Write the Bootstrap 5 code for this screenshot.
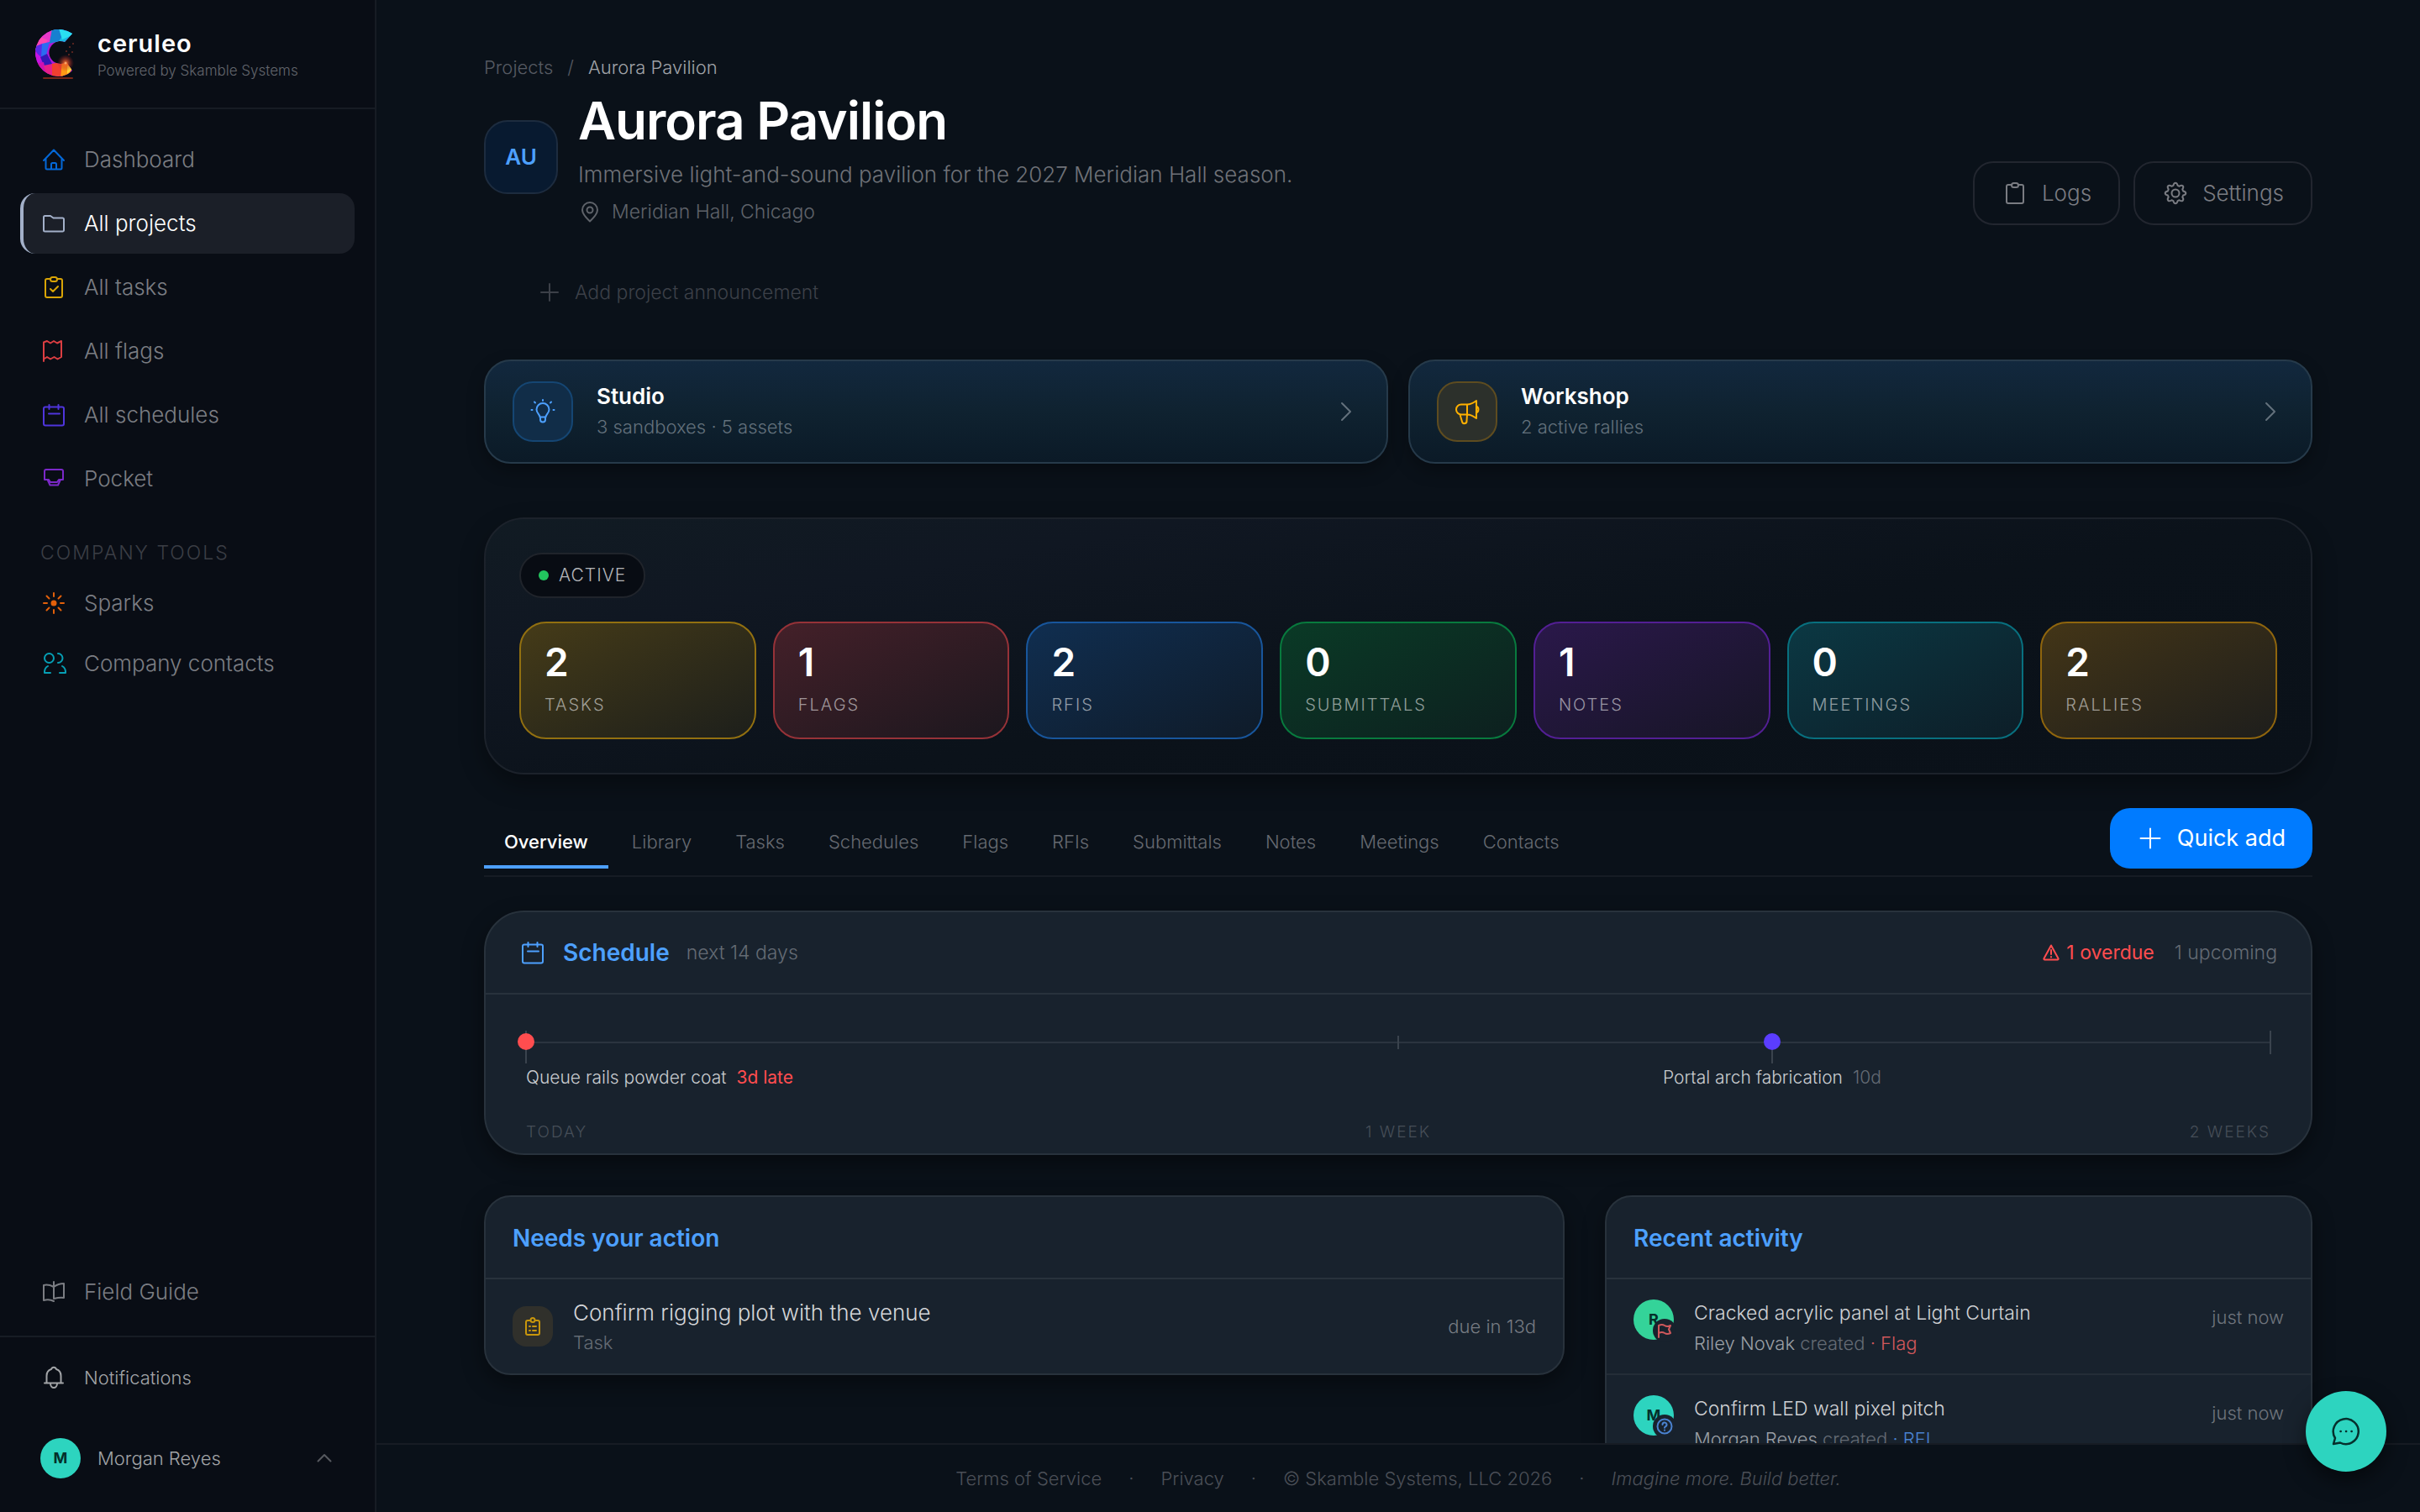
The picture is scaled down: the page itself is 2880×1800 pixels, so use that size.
<!DOCTYPE html>
<html lang="en" data-bs-theme="dark">
<head>
<meta charset="utf-8">
<meta name="viewport" content="width=device-width, initial-scale=1">
<title>Aurora Pavilion – ceruleo</title>
<link href="https://cdn.jsdelivr.net/npm/bootstrap@5.3.0/dist/css/bootstrap.min.css" rel="stylesheet">
<style>
  :root { --line: #171c24; --cardline: #28323c; --cardbg: #18222d; --sky: #4da0ff; --teal: #2dd4bf; }
  body { font-family: Inter, "Noto Sans", sans-serif; font-weight: 300; font-size: 22px; line-height: 32px; background: #0a1119; color: #c9ccd0; }
  a { color: inherit; text-decoration: none; }
  button { font-weight: 300; }
  svg { display: block; flex: none; fill: none; stroke: currentColor; stroke-width: 2; stroke-linecap: round; stroke-linejoin: round; }

  /* sidebar */
  .side { width: 448px; background: #090d15; border-right: 2px solid var(--line); }
  .brand { height: 130px; padding: 34px 40px 0; gap: 26px; border-bottom: 2px solid var(--line); }
  .brand-name { font-size: 29px; font-weight: 600; color: #fff; line-height: 36px; letter-spacing: 1px; }
  .brand-sub { font-size: 17px; line-height: 28px; color: #62656c; }
  .side-nav { padding: 24px 24px 0; gap: 4px; }
  .side-link { height: 72px; gap: 20px; padding: 0 20px; border-left: 4px solid transparent; border-radius: 18px; font-size: 26px; color: #7b7d83; }
  .side-link.active { background: #1b1f28; border-left-color: #a3b0c9; color: #fff; }
  .side-head { margin: 36px 24px 8px 48px; font-size: 23px; letter-spacing: 2px; color: #3b3e45; font-weight: 300; line-height: 32px; }
  .side-foot { border-top: 2px solid var(--line); padding: 12px 24px 28px; }
  .side-foot .side-link { font-size: 22px; color: #a2a4a7; }
  .face { width: 48px; height: 48px; border-radius: 50%; background: var(--teal); color: #04302b; font-weight: 700; font-size: 18px; flex: none; }

  /* page column */
  .scroller { padding: 64px 128px 0; }
  .crumbs { font-size: 22px; gap: 17px; color: #565a62; margin-bottom: 10px; }
  .monogram { width: 88px; height: 88px; border: 2px solid #1d2c3f; border-radius: 28px; background: #081a30; color: var(--sky); font-weight: 600; font-size: 26px; flex: none; }
  .headline { font-size: 62px; line-height: 76px; font-weight: 600; color: #fff; letter-spacing: -1px; }
  .tagline { font-size: 26px; line-height: 32px; margin: 10px 0 12px; color: #6f7278; }
  .place { font-size: 23px; gap: 12px; color: #5f636a; }
  .btn-ghost { height: 76px; padding: 0 32px; gap: 16px; border: 2px solid #22262f; border-radius: 24px; font-size: 26px; color: #7a7c82; background: transparent; }
  .announce { margin: 64px 0 64px 60px; gap: 12px; color: #3c4048; font-size: 23px; line-height: 32px; padding: 0; background: none; border: 0; }

  .portal { border: 2px solid #263a4a; border-radius: 32px; padding: 24px 32px; gap: 28px; background: linear-gradient(180deg, #12283e 0%, #0f2230 50%, #0b1a27 100%); box-shadow: 0 8px 20px rgba(0,0,0,.3); color: #63717c; }
  .portal-icon { width: 72px; height: 72px; border-radius: 24px; border: 2px solid #154673; background: #112d48; color: var(--sky); flex: none; }
  .portal-icon.gold { border-color: #5e4c20; background: #2c302b; color: #ffb000; }
  .portal-name { font-size: 26px; line-height: 36px; font-weight: 600; color: #fff; }
  .portal-sub { font-size: 22px; line-height: 36px; }

  .pulse { margin-top: 64px; border: 2px solid #1c222b; border-radius: 48px; padding: 40px; background: linear-gradient(170deg, #111b23 0%, #101722 22%, #0b121a 55%, #0a1119 100%); box-shadow: 0 12px 28px rgba(0,0,0,.35); }
  .state { height: 54px; padding: 0 21px; gap: 12px; border: 2px solid #20242b; border-radius: 27px; background: #080c13; font-size: 21px; letter-spacing: 1px; color: #b4b6b9; margin-bottom: 28px; }
  .state i { width: 12px; height: 12px; border-radius: 50%; background: #22c55e; }
  .tiles { gap: 20px; }
  .tile { height: 140px; padding: 26px 28px 0; border: 2px solid var(--edge); border-radius: 32px; background: linear-gradient(155deg, var(--from), var(--to)); }
  .tile b { display: block; font-size: 46px; line-height: 40px; font-weight: 600; color: #fff; }
  .tile span { display: block; font-size: 20px; line-height: 28px; margin-top: 17px; letter-spacing: 2px; color: rgba(255,255,255,.55); }

  .tabs { margin-top: 40px; padding-bottom: 8px; border-bottom: 2px solid #161c24; }
  .tabs a { padding: 0 24px 12px; border-bottom: 4px solid transparent; color: #666a71; font-size: 22px; }
  .tabs a.active { color: #fff; border-bottom-color: var(--sky); font-weight: 500; }
  .btn-quick { height: 72px; padding: 0 32px; gap: 16px; border: 0; border-radius: 24px; background: #007bff; color: #fff; font-size: 27px; font-weight: 400; }

  .panel { border: 2px solid var(--cardline); border-radius: 32px; background: var(--cardbg); box-shadow: 0 10px 26px rgba(0,0,0,.4); }
  .panel-big { border-radius: 48px; margin-top: 40px; }
  .panel-head { height: 98px; padding: 2px 32px 0; border-bottom: 2px solid var(--cardline); }
  .panel-big .panel-head { padding: 0 40px; }
  .panel-title { font-size: 28px; line-height: 32px; font-weight: 600; color: var(--sky); margin: 0; }
  .faint { color: #646b74; }
  .note { font-size: 23px; }
  .late { color: #ff4d4f; font-weight: 400; }
  .rail-wrap { padding: 40px 48px 13px; }
  .rail { position: relative; height: 72px; }
  .rail::before { content: ""; position: absolute; left: 0; right: 0; top: 16px; height: 2px; background: #2b343f; }
  .tick { position: absolute; width: 2px; height: 28px; top: 3px; margin-left: -1px; background: #3a434d; }
  .tick.half { height: 16px; top: 9px; }
  .pin { position: absolute; top: 6px; width: 20px; height: 20px; margin-left: -10px; border-radius: 50%; }
  .pin::after { content: ""; position: absolute; left: 9px; top: 20px; width: 2px; height: 16px; background: #3a434d; }
  .pin-text { position: absolute; top: 43px; font-size: 21px; line-height: 32px; white-space: nowrap; color: #c9ccd0; }
  .pin-text.mid { transform: translateX(-50%); }
  .axis { margin-top: 40px; font-size: 19px; line-height: 24px; letter-spacing: 2px; color: #464e58; }

  .duo { display: grid; grid-template-columns: 84fr 55fr; gap: 48px; margin-top: 48px; align-items: start; }
  .todo { height: 112px; padding: 0 32px; gap: 24px; }
  .todo-name { font-size: 26px; line-height: 38px; color: #d4d6d9; }
  .chip { width: 48px; height: 48px; border-radius: 16px; background: #30302b; color: #c8960c; flex: none; }
  .entry { height: 114px; padding: 24px 32px 0; gap: 24px; border-bottom: 2px solid #242d37; }
  .entry .face { position: relative; }
  .entry-name { font-size: 23px; color: #cfd1d4; }
  .entry-by { margin-top: 4px; color: #9a9fa5; }
  .kind { position: absolute; right: -3px; bottom: -3px; width: 28px; height: 28px; border-radius: 50%; background: var(--cardbg); }
  .when { line-height: 42px; color: #6f757d; }
  .red { color: #d0585c; }
  .blue { color: #4a82d0; }
  .foot { height: 82px; border-top: 2px solid var(--line); gap: 32px; color: #4b4f57; background: #0a1119; }
  .chat { position: absolute; right: 40px; bottom: 48px; width: 96px; height: 96px; border: 0; border-radius: 50%; background: var(--teal); color: #06302d; box-shadow: 0 10px 24px rgba(0,0,0,.5); }
</style>
<script src="https://cdn.jsdelivr.net/npm/bootstrap@5.3.0/dist/js/bootstrap.bundle.min.js"></script>
</head>
<body>
<div class="d-flex vh-100 overflow-hidden position-relative">

  <aside class="side d-flex flex-column flex-shrink-0">
    <div class="brand d-flex">
      <svg width="50" height="62" viewBox="0 0 50 62" aria-label="ceruleo logo">
        <defs>
          <clipPath id="cee"><path d="M46 6A28 28 0 1 0 29 57C36 57 42 54 46 50L39 40A13.500 13.500 0 1 1 37 16z"/></clipPath>
          <radialGradient id="ember"><stop offset="0" stop-color="#ffd090"/><stop offset=".2" stop-color="#f0602a" stop-opacity=".8"/><stop offset="1" stop-color="#a01828" stop-opacity="0"/></radialGradient>
        </defs>
        <g clip-path="url(#cee)" stroke="none">
          <rect width="50" height="60" fill="#b018d8"/>
          <path d="M20 0h30v9L36 17 22 16z" fill="#18b8e0"/><path d="M22 0l-4 18 12-3L40 0z" fill="#1680d0"/><path d="M30 0l20 6-16 7z" fill="#2ae0f0"/>
          <path d="M22 0L4 10l4 10 11-4z" fill="#e838c8"/><path d="M4 8L0 26l9-2 8-10z" fill="#ff48b0"/>
          <path d="M0 22l10-4 6 8-8 10z" fill="#5a28e8"/><path d="M10 18l9-2-4 16-6 2z" fill="#2a6cf0"/><path d="M0 26l9 8-3 12z" fill="#c814e0"/>
          <path d="M8 34l8-4 6 12-8 6z" fill="#3418b8"/><path d="M2 42l10-2 4 18z" fill="#d010b0"/><path d="M12 44l10-2 2 16h-8z" fill="#e82088"/>
          <path d="M22 42l12-3 2 20H22z" fill="#f04030"/><path d="M34 38l14 6-8 14-8 1z" fill="#ff9a14"/><path d="M40 44l8 2-8 8z" fill="#ffd83a"/>
        </g>
        <circle cx="38" cy="41" r="10" fill="url(#ember)" stroke="none"/>
        <path d="M12 59h34" stroke="#c0381c" opacity=".6"/>
        <g fill="#b8402c" stroke="none"><circle cx="43" cy="22" r=".8"/><circle cx="47" cy="18" r=".8"/><circle cx="39" cy="27" r=".8"/><circle cx="46" cy="28" r=".8"/><circle cx="42" cy="31" r=".8"/></g>
      </svg>
      <div>
        <div class="brand-name">ceruleo</div>
        <div class="brand-sub">Powered by Skamble Systems</div>
      </div>
    </div>
    <nav class="side-nav d-flex flex-column">
      <a href="#" class="side-link d-flex align-items-center"><svg width="32" height="32" style="color:#0468d8"><path d="M4 17 16 4.500 28 17M6.500 14.500V26a1.500 1.500 0 0 0 1.500 1.500h16a1.500 1.500 0 0 0 1.500-1.500V14.500M13 27.500V21.500a1.500 1.500 0 0 1 1.500-1.500h3a1.500 1.500 0 0 1 1.500 1.500v6"/></svg>Dashboard</a>
      <a href="#" class="side-link active d-flex align-items-center"><svg width="32" height="32" style="color:#a3b0c9"><path d="M4 24V8.500A1.500 1.500 0 0 1 5.500 7H12l3.500 2.500h11A1.500 1.500 0 0 1 28 11v13a1.500 1.500 0 0 1-1.500 1.500h-21A1.500 1.500 0 0 1 4 24z"/></svg>All projects</a>
      <a href="#" class="side-link d-flex align-items-center"><svg width="32" height="32" style="color:#d9a406"><path d="M12 6H8a2 2 0 0 0-2 2v18a2 2 0 0 0 2 2h16a2 2 0 0 0 2-2V8a2 2 0 0 0-2-2h-4M12 18l3 3 6-6"/><rect x="12" y="4" width="8" height="5" rx="2.500"/></svg>All tasks</a>
      <a href="#" class="side-link d-flex align-items-center"><svg width="32" height="32" style="color:#dc3e42"><path d="M4 28V5.500l4-1.500 4 2.500L16 4l4 2.500L25 4v19l-4.500 2.500-4-2.500-4.500 2.500L8 23l-4 2.500"/></svg>All flags</a>
      <a href="#" class="side-link d-flex align-items-center"><svg width="32" height="32" style="color:#4f35dc"><rect x="4" y="6.500" width="24" height="22" rx="2"/><path d="M10.500 4v5M21.500 4v5M10 14.500h13"/></svg>All schedules</a>
      <a href="#" class="side-link d-flex align-items-center"><svg width="32" height="32" style="color:#7b28c8"><path d="M5 17V7a2 2 0 0 1 2-2h18a2 2 0 0 1 2 2v10h-5l-2 3h-8l-2-3zM8.500 17l3 6.500h9.500l3-6.500"/></svg>Pocket</a>
    </nav>
    <h2 class="side-head">COMPANY TOOLS</h2>
    <nav class="px-4 d-flex flex-column">
      <a href="#" class="side-link d-flex align-items-center"><svg width="32" height="32" style="color:#e2600a"><circle cx="16" cy="16" r="2.500" fill="currentColor"/><path d="M16 4v4M16 24v4M4 16h4M24 16h4M7.500 7.500l3 3M21.500 21.500l3 3M24.500 7.500l-3 3M10.500 21.500l-3 3"/></svg>Sparks</a>
      <a href="#" class="side-link d-flex align-items-center"><svg width="32" height="32" style="color:#069fb5"><circle cx="10.500" cy="9.500" r="5.500"/><path d="M12 27H5v-1.500a8 8 0 0 1 4-6.500M21 4a5.500 5.500 0 0 1 0 11M23 27h7v-1.500a8 8 0 0 0-4-6.500"/></svg>Company contacts</a>
    </nav>
    <div class="mt-auto px-4 pb-3">
      <a href="#" class="side-link d-flex align-items-center"><svg width="32" height="32"><path d="M16 27c-4-2-8-2-12-1V8c4-1 8 0 12 2 4-3 8-4 12-4v17c-4-1-8 0-12 1M16 4v20"/></svg>Field Guide</a>
    </div>
    <div class="side-foot d-flex flex-column gap-4">
      <a href="#" class="side-link d-flex align-items-center"><svg width="32" height="32"><path d="M5 22.500h22M7.500 22.500V14c0-4 2-7 5.500-8 1-3 5-3 6 0 3.500 1 5.500 4 5.500 8v8.500M12 23a4 5 0 0 0 8 0"/></svg>Notifications</a>
      <button type="button" class="side-link border-0 bg-transparent d-flex align-items-center ps-4"><span class="face d-flex align-items-center justify-content-center">M</span>Morgan Reyes<svg width="32" height="32" class="ms-auto" style="color:#56595f"><path d="m8.500 19.500 7.500-7.500 7.500 7.500"/></svg></button>
    </div>
  </aside>

  <main class="flex-grow-1 d-flex flex-column overflow-hidden">
    <div class="scroller flex-grow-1 overflow-hidden">
      <nav class="crumbs d-flex" aria-label="breadcrumb"><a href="#">Projects</a><span>/</span><span style="color:#a0a3a8">Aurora Pavilion</span></nav>

      <header class="d-flex align-items-end justify-content-between">
        <div class="d-flex align-items-center gap-4">
          <div class="monogram d-flex align-items-center justify-content-center">AU</div>
          <div>
            <h1 class="headline mb-0">Aurora Pavilion</h1>
            <p class="tagline">Immersive light-and-sound pavilion for the 2027 Meridian Hall season.</p>
            <div class="place d-flex align-items-center"><svg width="28" height="28"><path d="M23 12c0 5-9 13.500-9 13.500S5 17 5 12a9 9 0 0 1 18 0z"/><circle cx="14" cy="12" r="3.500"/></svg>Meridian Hall, Chicago</div>
          </div>
        </div>
        <div class="d-flex gap-3">
          <button type="button" class="btn-ghost d-flex align-items-center"><svg width="32" height="32"><path d="M12 6H8a2 2 0 0 0-2 2v18a2 2 0 0 0 2 2h16a2 2 0 0 0 2-2V8a2 2 0 0 0-2-2h-4"/><rect x="12" y="4" width="8" height="5" rx="2.500"/></svg>Logs</button>
          <button type="button" class="btn-ghost d-flex align-items-center"><svg width="32" height="32" viewBox="-16 -16 32 32"><circle r="4.500"/><path d="M9.100-2.600Q12.300-1.900 12.300 0T9.100 2.600L8.270 4.600Q10.100 7.300 8.700 8.700T4.600 8.270L2.600 9.100Q1.900 12.300 0 12.300T-2.600 9.100L-4.600 8.270Q-7.300 10.100-8.700 8.700T-8.270 4.600L-9.100 2.600Q-12.300 1.900-12.300 0T-9.100-2.600L-8.270-4.600Q-10.100-7.300-8.700-8.700T-4.600-8.270L-2.600-9.100Q-1.900-12.300 0-12.300T2.600-9.100L4.600-8.270Q7.300-10.100 8.700-8.700T8.270-4.600z"/></svg>Settings</button>
        </div>
      </header>

      <button type="button" class="announce d-flex align-items-center"><svg width="36" height="32"><path d="M18 6v20M8 16h20"/></svg>Add project announcement</button>

      <div class="d-flex gap-4">
        <a href="#" class="portal d-flex align-items-center flex-fill w-50">
          <span class="portal-icon d-flex align-items-center justify-content-center"><svg width="32" height="32"><path d="M12.500 22.500c0-3-4-4.500-4-9a7.500 7.500 0 0 1 15 0c0 4.500-4 6-4 9zM13 22.500v3a3 3 0 0 0 6 0v-3M16 2v1M2.500 14h1M28.500 14h1M6 4.500l1 1M26 4.500l-1 1"/></svg></span>
          <span class="flex-grow-1"><span class="portal-name d-block">Studio</span><span class="portal-sub d-block">3 sandboxes · 5 assets</span></span>
          <svg width="32" height="32"><path d="m11 6 10 10-10 10"/></svg>
        </a>
        <a href="#" class="portal d-flex align-items-center flex-fill w-50">
          <span class="portal-icon gold d-flex align-items-center justify-content-center"><svg width="32" height="32"><path d="M16 7.500H9a6 6 0 0 0 0 12h7zM16 7.500c4 0 7-1.500 11-4.500v21c-4-3-7-4.500-11-4.500M27 9.500a4.500 4.500 0 0 1 0 8M7.500 19.500l2.500 8.500a2.800 2.800 0 0 0 5.500-1l.500-7.500"/></svg></span>
          <span class="flex-grow-1"><span class="portal-name d-block">Workshop</span><span class="portal-sub d-block">2 active rallies</span></span>
          <svg width="32" height="32"><path d="m11 6 10 10-10 10"/></svg>
        </a>
      </div>

      <section class="pulse">
        <div class="state d-inline-flex align-items-center"><i></i>ACTIVE</div>
        <div class="d-flex tiles">
          <div class="tile flex-fill w-100" style="--edge:#927010;--from:#453b18;--to:#1d1f1b"><b>2</b><span>TASKS</span></div>
          <div class="tile flex-fill w-100" style="--edge:#963238;--from:#442029;--to:#1c171e"><b>1</b><span>FLAGS</span></div>
          <div class="tile flex-fill w-100" style="--edge:#18569c;--from:#102e50;--to:#0f1b29"><b>2</b><span>RFIS</span></div>
          <div class="tile flex-fill w-100" style="--edge:#087a3e;--from:#0a3a26;--to:#0d201f"><b>0</b><span>SUBMITTALS</span></div>
          <div class="tile flex-fill w-100" style="--edge:#531f94;--from:#2a184a;--to:#171526"><b>1</b><span>NOTES</span></div>
          <div class="tile flex-fill w-100" style="--edge:#08707f;--from:#0b3843;--to:#0d1e28"><b>0</b><span>MEETINGS</span></div>
          <div class="tile flex-fill w-100" style="--edge:#8f650d;--from:#433517;--to:#1e1e1c"><b>2</b><span>RALLIES</span></div>
        </div>
      </section>

      <div class="tabs d-flex align-items-end justify-content-between">
        <nav class="d-flex gap-1"><a href="#" class="active">Overview</a><a href="#">Library</a><a href="#">Tasks</a><a href="#">Schedules</a><a href="#">Flags</a><a href="#">RFIs</a><a href="#">Submittals</a><a href="#">Notes</a><a href="#">Meetings</a><a href="#">Contacts</a></nav>
        <button type="button" class="btn-quick d-flex align-items-center"><svg width="32" height="32"><path d="M16 4.500v23M4.500 16h23"/></svg>Quick add</button>
      </div>

      <section class="panel panel-big">
        <div class="panel-head d-flex align-items-center">
          <svg width="32" height="32" style="color:#4da0ff"><rect x="4" y="6.500" width="24" height="22" rx="2"/><path d="M10.500 4v5M21.500 4v5M10 14.500h13"/></svg>
          <h2 class="panel-title ms-3 me-3 ps-1 pe-1">Schedule</h2>
          <span class="note faint flex-grow-1">next 14 days</span>
          <span class="note late d-flex align-items-center gap-2"><svg width="20" height="20"><path d="M10 1.500 18.500 17a1 1 0 0 1-1 1.500h-15a1 1 0 0 1-1-1.500zM10 7v5M10 15v.500"/></svg>1 overdue</span>
          <span class="note faint ms-4">1 upcoming</span>
        </div>
        <div class="rail-wrap">
          <div class="rail">
            <i class="tick" style="left:0"></i><i class="tick half" style="left:50%"></i><i class="tick" style="left:100%"></i>
            <i class="pin" style="left:0;background:#ff4d4f"></i>
            <i class="pin" style="left:71.43%;background:#5b3dff"></i>
            <span class="pin-text" style="left:0">Queue rails powder coat<span class="late ms-2 ps-1">3d late</span></span>
            <span class="pin-text mid" style="left:71.43%">Portal arch fabrication<span class="faint ms-2 ps-1">10d</span></span>
          </div>
          <div class="axis d-flex"><span class="col">TODAY</span><span class="col text-center">1 WEEK</span><span class="col text-end">2 WEEKS</span></div>
        </div>
      </section>

      <div class="duo">
        <section class="panel">
          <div class="panel-head d-flex align-items-center"><h2 class="panel-title">Needs your action</h2></div>
          <div class="todo d-flex align-items-center">
            <span class="chip d-flex align-items-center justify-content-center"><svg width="20" height="24"><path d="M7 5H4a2 2 0 0 0-2 2v13a2 2 0 0 0 2 2h12a2 2 0 0 0 2-2V7a2 2 0 0 0-2-2h-3M6 12h1M10 12h4M6 17h1M10 17h4"/><circle cx="10" cy="4.500" r="2.500"/></svg></span>
            <div class="flex-grow-1">
              <div class="todo-name">Confirm rigging plot with the venue</div>
              <div class="faint">Task</div>
            </div>
            <span style="color:#767b82">due in 13d</span>
          </div>
        </section>
        <section class="panel pb-5">
          <div class="panel-head d-flex align-items-center"><h2 class="panel-title">Recent activity</h2></div>
          <div class="entry d-flex">
            <span class="face d-flex align-items-center justify-content-center" style="background:#34d399">R<span class="kind red d-flex align-items-center justify-content-center"><svg width="20" height="20"><path d="M3 18V4q4-2 7 0t7 0l-2 4.500 2 4.500q-4 2-7 0t-7 0"/></svg></span></span>
            <div class="flex-grow-1"><div class="entry-name">Cracked acrylic panel at Light Curtain</div><div class="entry-by">Riley Novak <span class="faint">created</span> <span class="red">· Flag</span></div></div>
            <span class="when">just now</span>
          </div>
          <div class="entry d-flex border-0">
            <span class="face d-flex align-items-center justify-content-center">M<span class="kind blue d-flex align-items-center justify-content-center"><svg width="20" height="20"><circle cx="10" cy="10" r="8.500"/><path d="M7.500 8a2.500 2.500 0 1 1 3.500 2.300q-1 .500-1 1.500M10 14.500v.200"/></svg></span></span>
            <div class="flex-grow-1"><div class="entry-name">Confirm LED wall pixel pitch</div><div class="entry-by">Morgan Reyes <span class="faint">created</span> <span class="blue">· RFI</span></div></div>
            <span class="when">just now</span>
          </div>
        </section>
      </div>
    </div>
    <footer class="foot d-flex align-items-center justify-content-center flex-shrink-0"><a href="#">Terms of Service</a><span>·</span><a href="#">Privacy</a><span>·</span><span>© Skamble Systems, LLC 2026</span><span>·</span><em>Imagine more. Build better.</em></footer>
  </main>

  <button type="button" class="chat d-flex align-items-center justify-content-center" aria-label="Open chat"><svg width="36" height="36"><path d="M3 33l2-7a15 15 0 1 1 6 5.500zM11.500 18h.200M18 18h.200M24.500 18h.200" stroke-width="2.500"/></svg></button>
</div>
</body>
</html>
